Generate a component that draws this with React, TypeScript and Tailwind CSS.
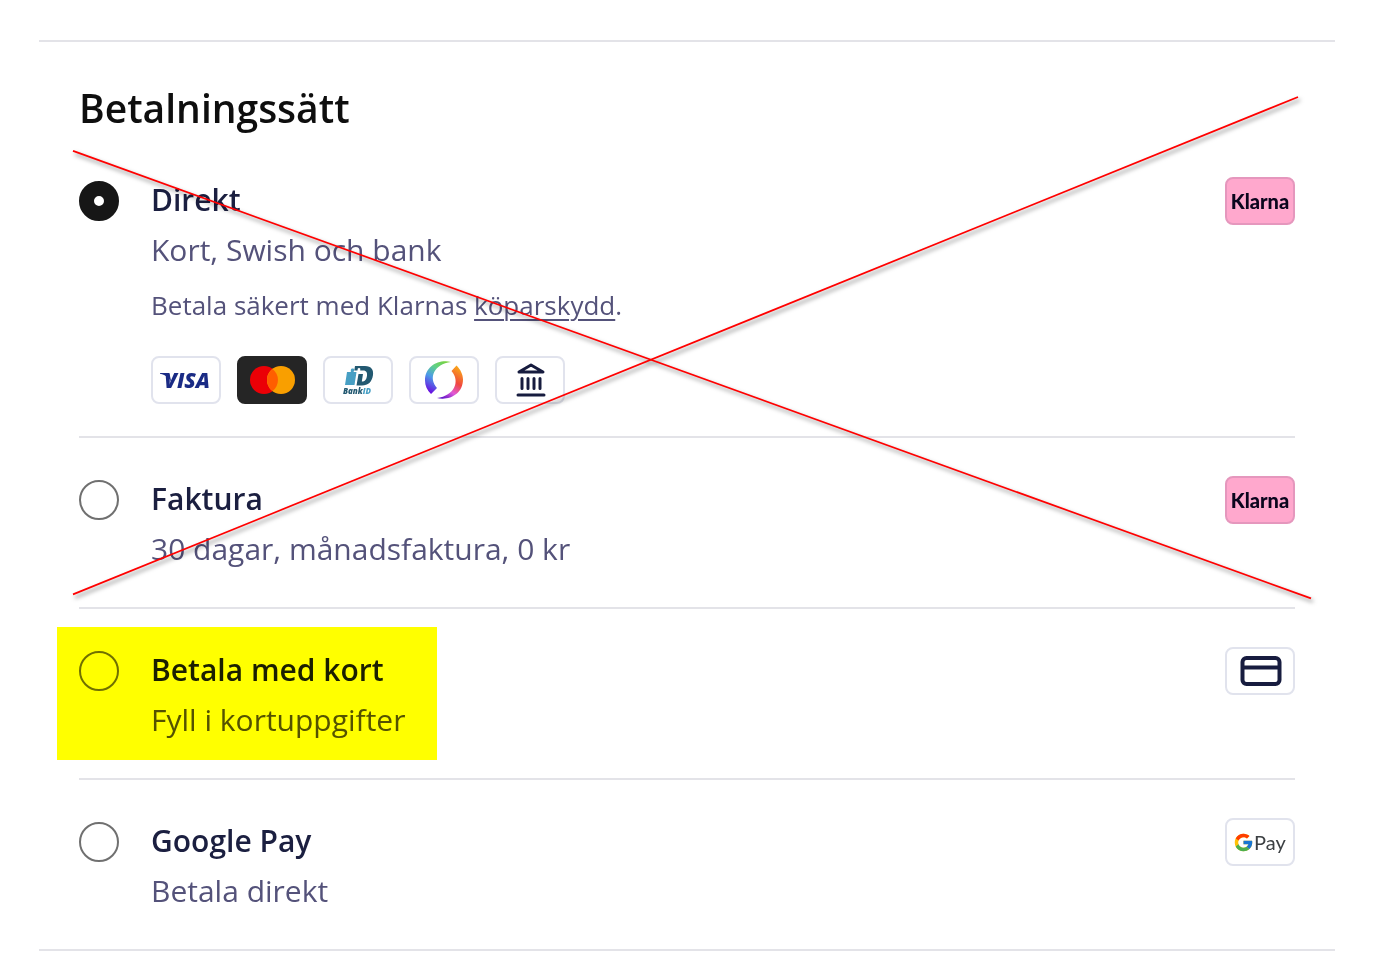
import type { ReactNode } from "react";
import { FcGoogle } from "react-icons/fc";

interface LogoFrameProps {
  label: string;
  className?: string;
  children: ReactNode;
}

const LogoFrame = ({
  label,
  className = "bg-white border-[#e1e3ed]",
  children,
}: LogoFrameProps) => {
  return (
    <span
      className={`block w-[70px] h-12 shrink-0 rounded-lg border-2 overflow-hidden ${className}`}
    >
      <svg viewBox="2 2 66 44" className="block w-full h-full" role="img" aria-label={label}>
        {children}
      </svg>
    </span>
  );
};

const KlarnaLogo = () => (
  <LogoFrame label="Klarna" className="bg-[#ffa8cd] border-[#e597bd]">
    <text
      x="35"
      y="32"
      textAnchor="middle"
      fontSize="20"
      fontWeight="900"
      fill="#0b051d"
      className="font-['Lato',sans-serif]"
    >
      Klarna
    </text>
  </LogoFrame>
);

const VisaLogo = () => (
  <LogoFrame label="Visa">
    <path d="M9 17h7.500c1.500 0 2 .6 2.300 2l1.700 8c-1.500-5-5.500-8-11.500-9.300z" fill="#1a2b85" />
    <text
      x="36"
      y="32"
      textAnchor="middle"
      fontSize="21"
      fontWeight="800"
      fontStyle="italic"
      fill="#1a2b85"
      className="font-['Open_Sans',sans-serif]"
    >
      VISA
    </text>
  </LogoFrame>
);

const MastercardLogo = () => (
  <LogoFrame label="Mastercard" className="bg-[#252525] border-[#252525]">
    <circle cx="27" cy="24" r="14" fill="#eb0006" />
    <circle cx="44" cy="24" r="14" fill="#f99f00" />
    <path d="M35.500 12.900a14 14 0 0 1 0 22.200a14 14 0 0 1 0-22.200z" fill="#ff5e00" />
  </LogoFrame>
);

const BankIdLogo = () => (
  <LogoFrame label="BankID">
    <path
      d="M24 16h3.600c.8-.6 0-1 .2-2c.3-1.900 3.600-1.900 3.400 0c-.1 1-1 1.400-.3 2h2.600l-2 13h-9.500z"
      fill="#479fc4"
    />
    <path
      d="M32 10H42c6.500 0 8.800 4 8 9c-1 7-5 10.500-11 10.500h-5.500L35.500 18h4.500l-1.200 7.500c3.200 0 4.700-2 5.200-6c.4-3.500-1-5-4-5h-2.500c-.8-.4 0-1.200-.2-1.800c-.4-1-2.200-1-2.600 0c-.2.600.2 1.400-.4 1.800h-3z"
      fill="#235971"
    />
    <text
      x="34"
      y="38"
      textAnchor="middle"
      fontSize="8"
      fontWeight="800"
      fontStyle="italic"
      fill="#235971"
      className="font-['Open_Sans',sans-serif]"
    >
      Bank<tspan fill="#479fc4">ID</tspan>
    </text>
  </LogoFrame>
);

const SwishLogo = () => (
  <LogoFrame label="Swish">
    <defs>
      <linearGradient id="swish-left" x1="0.8" y1="0" x2="0.3" y2="1">
        <stop offset="0" stopColor="#78d23c" />
        <stop offset="0.3" stopColor="#5fd08a" />
        <stop offset="0.6" stopColor="#4c9be8" />
        <stop offset="1" stopColor="#6a0fe0" />
      </linearGradient>
      <linearGradient id="swish-right" x1="0.7" y1="0" x2="0.2" y2="1">
        <stop offset="0" stopColor="#f9a51a" />
        <stop offset="0.4" stopColor="#f0483e" />
        <stop offset="0.7" stopColor="#e05ad8" />
        <stop offset="1" stopColor="#5a10c8" />
      </linearGradient>
    </defs>
    <path
      d="M42 6C30 3 16 10 16 24.500c0 5 2 9.500 6 13.500l6-6c-9-10-3-24 14-26z"
      fill="url(#swish-left)"
    />
    <path
      d="M28 42c12 3 26-4 26-18.500c0-5-2.500-10-6.500-14l-5 5.500c9 10 3 25-14.500 27z"
      fill="url(#swish-right)"
    />
  </LogoFrame>
);

const BankLogo = () => (
  <LogoFrame label="Bank">
    <g fill="none" stroke="#171c3f" strokeWidth="3" strokeLinecap="round" strokeLinejoin="round">
      <path d="M24 16L36 9L48 16z" />
      <path d="M27 22.500V32.500M33 22.500V32.500M39 22.500V32.500M45 22.500V32.500" />
      <path d="M23 39H49" />
    </g>
  </LogoFrame>
);

const CardLogo = () => (
  <LogoFrame label="Kort">
    <rect
      x="17.500"
      y="11"
      width="37"
      height="26"
      rx="4"
      fill="none"
      stroke="#171c3f"
      strokeWidth="4"
    />
    <path d="M17 20.500H55" stroke="#171c3f" strokeWidth="4" />
  </LogoFrame>
);

const GooglePayLogo = () => (
  <LogoFrame label="Google Pay">
    <FcGoogle x="8" y="14" size={21} />
    <text
      x="29"
      y="32"
      fontSize="20"
      fill="#3c4043"
      className="font-['Lato',sans-serif]"
    >
      Pay
    </text>
  </LogoFrame>
);

interface PaymentOptionProps {
  id: string;
  title: string;
  description: string;
  logo: ReactNode;
  checked?: boolean;
  highlighted?: boolean;
  last?: boolean;
  children?: ReactNode;
}

const PaymentOption = ({
  id,
  title,
  description,
  logo,
  checked,
  highlighted,
  last,
  children,
}: PaymentOptionProps) => {
  return (
    <li
      className={`relative flex items-start pt-[38px] ${
        children ? "pb-8" : "pb-[33px]"
      } ${last ? "" : "border-b-2 border-[#e3e3e8]"}`}
    >
      <input
        type="radio"
        name="payment"
        id={id}
        defaultChecked={checked}
        className="appearance-none w-10 h-10 mt-1 mr-8 shrink-0 rounded-full bg-white border-2 border-[#707070] checked:border-[15px] checked:border-[#161616]"
      />
      <div className="flex-1">
        <label htmlFor={id} className="block text-[30px] leading-[50px]">
          <span className="block h-12 leading-[46px] font-semibold text-[#1b1f40]">{title}</span>
          <span className="block text-[#54527a]">{description}</span>
        </label>
        {children}
      </div>
      {logo}
      {highlighted && (
        <div className="absolute -left-[22px] top-[18px] w-[380px] h-[133px] bg-[#ffff00] mix-blend-multiply pointer-events-none" />
      )}
    </li>
  );
};

const CrossOut = () => (
  <svg
    viewBox="0 0 1296 908"
    preserveAspectRatio="none"
    className="absolute inset-0 w-full h-full overflow-visible pointer-events-none drop-shadow-[2px_3px_2px_rgba(0,0,0,0.5)]"
    aria-hidden="true"
  >
    <g stroke="#ff0000" strokeWidth="1.700">
      <path d="M34 109L1272 557" />
      <path d="M34 553L1259 55" />
    </g>
  </svg>
);

const App = () => {
  return (
    <main className="bg-white pt-10 pb-4 pl-[39px] pr-[50px] font-['Open_Sans',sans-serif]">
      <section className="relative border-y-2 border-[#e3e3e8] px-10">
        <h1 className="pt-9 pb-px text-[39px] leading-[60px] font-semibold text-[#0e0e0e]">
          Betalningssätt
        </h1>
        <ul>
          <PaymentOption
            id="direkt"
            title="Direkt"
            description="Kort, Swish och bank"
            logo={<KlarnaLogo />}
            checked
          >
            <p className="mt-[10px] text-[26px] leading-10 text-[#54527a]">
              Betala säkert med Klarnas{" "}
              <a href="#" className="underline underline-offset-4 decoration-2">
                köparskydd
              </a>
              .
            </p>
            <div className="flex gap-4 mt-[31px]">
              <VisaLogo />
              <MastercardLogo />
              <BankIdLogo />
              <SwishLogo />
              <BankLogo />
            </div>
          </PaymentOption>
          <PaymentOption
            id="faktura"
            title="Faktura"
            description="30 dagar, månadsfaktura, 0 kr"
            logo={<KlarnaLogo />}
          />
          <PaymentOption
            id="kort"
            title="Betala med kort"
            description="Fyll i kortuppgifter"
            logo={<CardLogo />}
            highlighted
          />
          <PaymentOption
            id="google-pay"
            title="Google Pay"
            description="Betala direkt"
            logo={<GooglePayLogo />}
            last
          />
        </ul>
        <CrossOut />
      </section>
    </main>
  );
};

export default App;
